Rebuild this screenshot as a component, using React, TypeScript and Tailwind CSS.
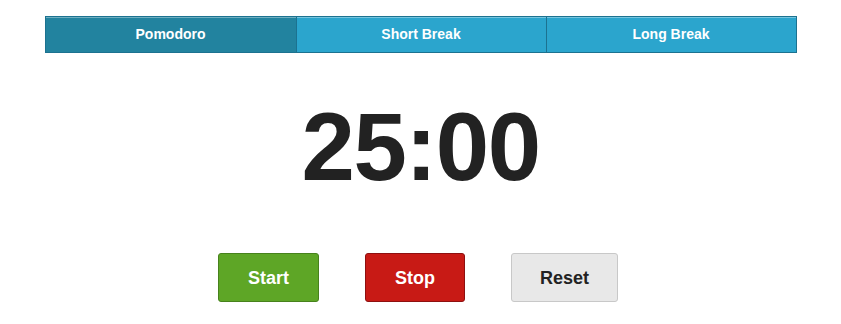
import { useState } from "react"

const TABS = [
  { value: "pomodoro", label: "Pomodoro", minutes: 25 },
  { value: "short", label: "Short Break", minutes: 5 },
  { value: "long", label: "Long Break", minutes: 10 },
]

export default function App() {
  const [mode, setMode] = useState("pomodoro")
  const [seconds, setSeconds] = useState(25 * 60)

  const pick = (value: string, minutes: number) => {
    setMode(value)
    setSeconds(minutes * 60)
  }

  const mm = String(Math.floor(seconds / 60)).padStart(2, "0")
  const ss = String(seconds % 60).padStart(2, "0")

  return (
    <div
      className="min-h-screen bg-white pt-4"
      style={{ fontFamily: '"Liberation Sans", Arial, sans-serif' }}
    >
      <div className="mx-auto grid w-[752px] grid-cols-3 border border-[#1c7290]">
        {TABS.map((tab, i) => (
          <button
            key={tab.value}
            type="button"
            onClick={() => pick(tab.value, tab.minutes)}
            className={
              "h-[35px] text-[14px] font-bold text-white shadow-[inset_0_1px_0_rgba(255,255,255,0.35)] " +
              (i > 0 ? "border-l border-[#1c7290] " : "") +
              (mode === tab.value ? "bg-[#22839f]" : "bg-[#2ba5cd]")
            }
          >
            {tab.label}
          </button>
        ))}
      </div>

      <div className="mt-[46px] text-center text-[96px] font-bold leading-none tracking-[-1.5px] text-[#222222]">
        {mm}:{ss}
      </div>

      <div className="mt-[58px] flex justify-center gap-[46px] pr-[5px]">
        <button
          type="button"
          className="rounded-[3px] border border-[#47821c] bg-[#5ea626] px-[29px] pt-[11px] pb-[9px] text-[18px] font-bold leading-[27px] text-white"
        >
          Start
        </button>
        <button
          type="button"
          className="rounded-[3px] border border-[#8e1010] bg-[#c81a15] px-[29px] pt-[11px] pb-[9px] text-[18px] font-bold leading-[27px] text-white"
        >
          Stop
        </button>
        <button
          type="button"
          onClick={() => setSeconds(TABS.find((t) => t.value === mode)!.minutes * 60)}
          className="rounded-[3px] border border-[#c8c8c8] bg-[#e8e8e8] px-[28px] pt-[11px] pb-[9px] text-[18px] font-bold leading-[27px] text-[#222222]"
        >
          Reset
        </button>
      </div>
    </div>
  )
}
